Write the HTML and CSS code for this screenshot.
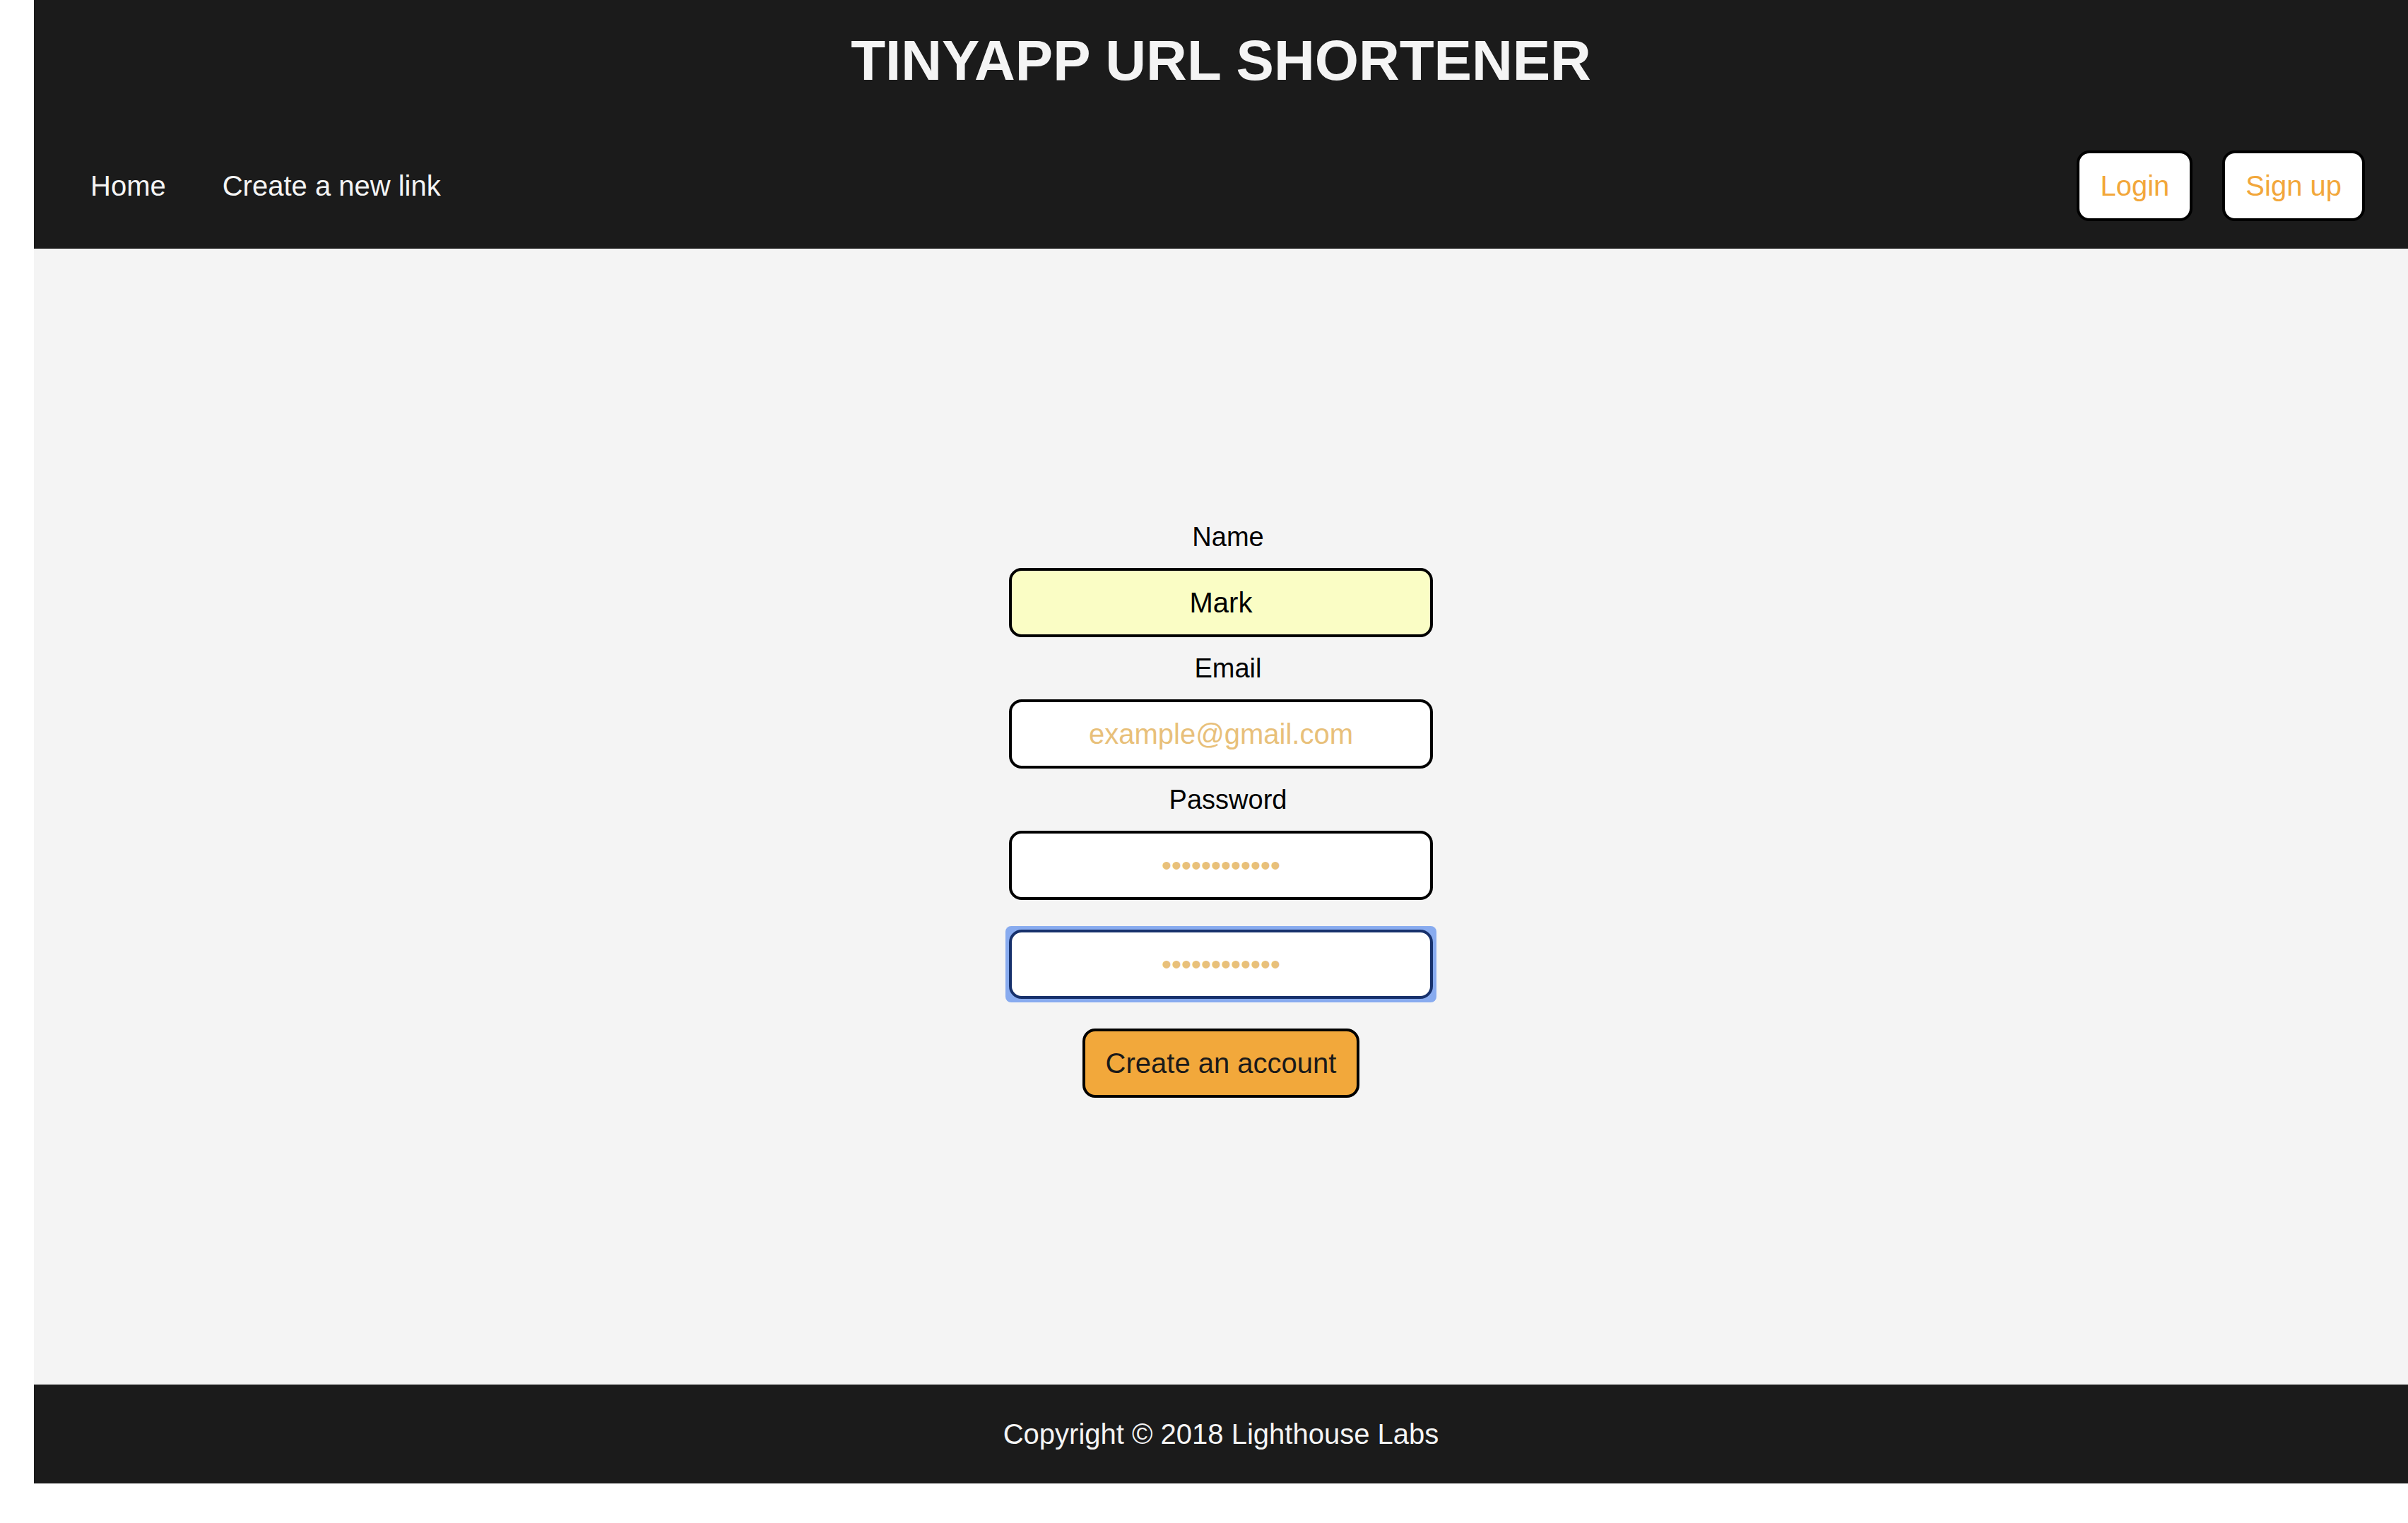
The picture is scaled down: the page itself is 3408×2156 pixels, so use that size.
FILE: index.html
```html
<!DOCTYPE html>
<html lang="en">
<head>
<meta charset="utf-8">
<title>TinyApp URL Shortener</title>
<link rel="stylesheet" href="styles.css">
</head>
<body>
<div class="page">
  <header class="site-header">
    <h1 class="site-title">TINYAPP URL SHORTENER</h1>
    <nav class="nav">
      <div class="nav-links">
        <a class="nav-link" href="#">Home</a>
        <a class="nav-link" href="#">Create a new link</a>
      </div>
      <div class="nav-actions">
        <a class="nav-btn" href="#">Login</a>
        <a class="nav-btn" href="#">Sign up</a>
      </div>
    </nav>
  </header>
  <main class="main">
    <form class="signup-form">
      <label class="field-label" for="name">Name</label>
      <input class="field-input field-filled" id="name" type="text" value="Mark">
      <label class="field-label" for="email">Email</label>
      <input class="field-input" id="email" type="email" placeholder="example@gmail.com">
      <label class="field-label" for="password">Password</label>
      <input class="field-input" id="password" type="password" placeholder="••••••••••••">
      <div class="focus-ring">
        <input class="field-input field-focused" type="password" placeholder="••••••••••••">
      </div>
      <button class="submit-btn" type="button">Create an account</button>
    </form>
  </main>
  <footer class="site-footer">Copyright © 2018 Lighthouse Labs</footer>
</div>
</body>
</html>
```

FILE: styles.css
```css
html, body {
  margin: 0;
  padding: 0;
  background: #ffffff;
}

body {
  font-family: "Liberation Sans", Arial, Helvetica, sans-serif;
  padding: 0 0 56px 48px;
}

.page {
  display: flex;
  flex-direction: column;
}

.site-header {
  background: #1b1b1b;
  height: 352px;
  display: flex;
  flex-direction: column;
}

.site-title {
  margin: 0;
  height: 172px;
  box-sizing: border-box;
  padding-top: 40px;
  font-size: 80px;
  line-height: 92px;
  font-weight: 700;
  color: #f4f4f4;
  text-align: center;
}

.nav {
  flex: 1;
  display: flex;
  align-items: center;
  justify-content: space-between;
  padding: 2px 61px 0 40px;
}

.nav-links {
  display: flex;
}

.nav-link {
  color: #f4f4f4;
  text-decoration: none;
  font-size: 40px;
  padding: 0 40px;
}

.nav-actions {
  display: flex;
  gap: 42px;
}

.nav-btn {
  display: flex;
  align-items: center;
  height: 100px;
  box-sizing: border-box;
  padding: 0 29px;
  background: #ffffff;
  border: 4px solid #000000;
  border-radius: 18px;
  color: #f2a73b;
  text-decoration: none;
  font-size: 40px;
}

.main {
  background: #f4f4f4;
  height: 1608px;
  box-sizing: border-box;
  padding-top: 386px;
}

.signup-form {
  display: flex;
  flex-direction: column;
  align-items: center;
  gap: 22px;
}

.field-label {
  font-size: 38px;
  line-height: 44px;
  color: #000000;
  padding-left: 20px;
}

.field-input {
  width: 600px;
  height: 98px;
  box-sizing: border-box;
  border: 4px solid #000000;
  border-radius: 18px;
  background: #ffffff;
  font-family: "Liberation Sans", Arial, Helvetica, sans-serif;
  font-size: 40px;
  color: #000000;
  text-align: center;
  padding: 0 20px;
  outline: none;
}

.field-input::placeholder {
  color: #e8c07a;
  opacity: 1;
}

.field-filled {
  background: #fafdc5;
}

.focus-ring {
  margin: 15px -5px -5px;
  padding: 5px;
  border-radius: 8px;
  background: #88abef;
  display: flex;
}

.field-focused {
  border-color: #17316c;
}

.submit-btn {
  margin-top: 20px;
  height: 98px;
  box-sizing: border-box;
  padding: 0 29px;
  background: #f2a83b;
  border: 4px solid #000000;
  border-radius: 18px;
  color: #1a1a1a;
  font-family: "Liberation Sans", Arial, Helvetica, sans-serif;
  font-size: 40px;
}

.site-footer {
  background: #1b1b1b;
  height: 140px;
  display: flex;
  align-items: center;
  justify-content: center;
  color: #f4f4f4;
  font-size: 40px;
}
```
